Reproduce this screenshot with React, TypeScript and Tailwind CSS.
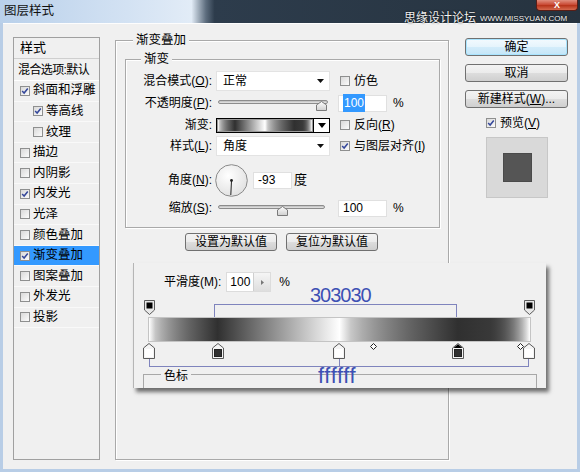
import React from "react";

// Gradient used by the preview swatch and the editor bar (stops 0/18/50/81/100).
const GRAD =
  "bg-[linear-gradient(to_right,#ffffff_0%,5%,#303030_18%,#ffffff_50%,59%,#303030_81%,97%,#ffffff_100%)]";

const STYLES = [
  { label: "斜面和浮雕", on: true },
  { label: "等高线", on: true, sub: true },
  { label: "纹理", sub: true },
  { label: "描边" },
  { label: "内阴影" },
  { label: "内发光", on: true },
  { label: "光泽" },
  { label: "颜色叠加" },
  { label: "渐变叠加", on: true, active: true },
  { label: "图案叠加" },
  { label: "外发光" },
  { label: "投影" },
];

const BTN =
  "h-[18px] border border-[#707070] rounded-[3px] bg-[linear-gradient(to_bottom,#f3f3f3_0%,#ebebeb_50%,#dddddd_51%,#cfcfcf_100%)] flex items-center justify-center text-[12px] text-black";

function Check({ on }: { on?: boolean }) {
  return (
    <span className="w-[10px] h-[10px] border border-[#8e8f8f] bg-[linear-gradient(135deg,#d9d9d9,#fbfbfb)] flex items-center justify-center shrink-0">
      {on && (
        <svg viewBox="0 0 9 9" className="w-[8px] h-[8px]">
          <path d="M1.3 4.6 L3.5 6.8 L7.6 1.6" stroke="#34479a" strokeWidth="1.7" fill="none" />
        </svg>
      )}
    </span>
  );
}

function Select({ value }: { value: string }) {
  return (
    <div className="w-[114px] h-[20px] bg-white border border-[#e3e3e3] flex items-center pl-[6px] pr-[5px]">
      <span className="flex-1">{value}</span>
      <svg width="7" height="4" viewBox="0 0 7 4">
        <path d="M0 0H7L3.5 4Z" fill="#111" />
      </svg>
    </div>
  );
}

function Thumb() {
  return (
    <svg width="11" height="10" viewBox="0 0 11 10">
      <defs>
        <linearGradient id="th" x1="0" y1="0" x2="0" y2="1">
          <stop offset="0" stopColor="#ffffff" />
          <stop offset="1" stopColor="#cfcfcf" />
        </linearGradient>
      </defs>
      <path d="M0.5 4 L5.5 0.5 L10.5 4 V9.5 H0.5 Z" fill="url(#th)" stroke="#7a7a7a" />
    </svg>
  );
}

function Slider({ pos, width }: { pos: number; width: number }) {
  return (
    <div className="w-[114px] h-[20px] relative pl-[2px] pt-[7px]">
      <div
        className="h-[4px] rounded-full border border-[#8c8c8c] bg-[linear-gradient(to_bottom,#bdbdbd,#e6e6e6)]"
        style={{ width }}
      />
      <div className="absolute top-[8px]" style={{ left: pos }}>
        <Thumb />
      </div>
    </div>
  );
}

function Field({ value, w, selected }: { value: string; w: string; selected?: boolean }) {
  return (
    <div className={`${w} h-[17px] bg-white border border-[#e0e0e0] flex items-center pl-[4px] font-['Liberation_Sans',sans-serif] text-[12px]`}>
      <span className={selected ? "bg-[#3399ff] text-white px-[1px]" : ""}>{value}</span>
    </div>
  );
}

function Label({ children }: { children: React.ReactNode }) {
  return <div className="w-[90px] pr-[4px] text-right shrink-0">{children}</div>;
}

function TopStop({ left }: { left: number }) {
  return (
    <svg width="11" height="15" viewBox="0 0 11 15" className="absolute top-[14px]" style={{ left }}>
      <path d="M0.5 0.5 H10.5 V10 L5.5 14.5 L0.5 10 Z" fill="#e8e8e8" stroke="#5a5a5a" />
      <rect x="2.5" y="2.5" width="6" height="6" fill="#000" />
    </svg>
  );
}

function BottomStop({ left, color, selected }: { left: number; color: string; selected?: boolean }) {
  return (
    <svg width="12" height="16" viewBox="0 0 12 16" className="absolute top-[57px]" style={{ left }}>
      <path d="M0.5 5 L6 0.5 L11.5 5 V15.5 H0.5 Z" fill="#f4f4f4" stroke="#5a5a5a" />
      {selected && <path d="M1.5 5 L6 1.3 L10.5 5 Z" fill="#000" />}
      <rect x="2.5" y="6.5" width="7" height="7" fill={color} stroke={color === "#ffffff" ? "#ffffff" : "#222"} />
    </svg>
  );
}

function Diamond({ left }: { left: number }) {
  return (
    <svg width="7" height="7" viewBox="0 0 7 7" className="absolute top-[57px]" style={{ left }}>
      <path d="M3.5 0.5 L6.5 3.5 L3.5 6.5 L0.5 3.5 Z" fill="#fff" stroke="#222" />
    </svg>
  );
}

function GradientOverlay() {
  return (
    <div className="absolute left-[133px] top-[263px] w-[413px] h-[125px] bg-[#f0f0f0] border-l border-[#b5b5b5] shadow-[3px_4px_4px_rgba(0,0,0,0.55)] flex flex-col">
      {/* smoothness row */}
      <div className="flex items-center h-[20px] mt-[9px] pl-[30px]">
        <span className="font-['Liberation_Sans','Noto_Sans_CJK_SC',sans-serif]">平滑度(M):</span>
        <div className="ml-[5px] w-[45px] h-[20px] bg-white border border-[#dcdcdc] flex items-center font-['Liberation_Sans',sans-serif]">
          <span className="flex-1 pl-[3px]">100</span>
          <span className="w-[17px] h-full border-l border-[#cfcfcf] bg-[linear-gradient(to_bottom,#f5f5f5,#dedede)] flex items-center justify-center">
            <svg width="3" height="5" viewBox="0 0 3 5">
              <path d="M0 0 L3 2.5 L0 5Z" fill="#777" />
            </svg>
          </span>
        </div>
        <span className="ml-[8px] font-['Liberation_Sans',sans-serif]">%</span>
      </div>

      {/* gradient editor canvas */}
      <div className="relative flex-1 -mt-[6px]">
        <div className="absolute left-[176px] -top-[1px] text-[20px] leading-[20px] tracking-[-1px] text-[#3d50b4] font-['Liberation_Sans',sans-serif]">
          303030
        </div>
        <div className="absolute left-[80px] top-[18px] w-[243px] h-[14px] border-t border-l border-r border-[#7f84bd]" />
        <TopStop left={10} />
        <TopStop left={390} />
        <div className={`absolute left-[14px] top-[31px] w-[383px] h-[25px] border border-[#c4c4c4] ${GRAD}`} />
        <BottomStop left={9} color="#ffffff" />
        <BottomStop left={78} color="#303030" />
        <BottomStop left={199} color="#ffffff" />
        <BottomStop left={318} color="#303030" selected />
        <BottomStop left={389} color="#ffffff" />
        <Diamond left={236} />
        <Diamond left={383} />
        <div className="absolute left-[15px] top-[73px] w-[380px] h-[8px] border-l border-r border-b border-[#7f84bd]" />
        <div className="absolute left-[205px] top-[73px] w-[1px] h-[8px] bg-[#7f84bd]" />
        {/* 色标 group */}
        <div className="absolute left-[9px] top-[88px] w-[394px] h-[14px] border-t border-l border-r border-[#a8a8a8]" />
        <div className="absolute left-[27px] top-[81px] px-[3px] bg-[#f0f0f0] text-[12px]">色标</div>
        <div className="absolute left-[184px] top-[79px] text-[22px] leading-[22px] tracking-[0.6px] text-[#3d50b4] font-['Liberation_Sans',sans-serif]">
          ffffff
        </div>
      </div>
    </div>
  );
}

export default function App() {
  return (
    <div className="w-[580px] h-[472px] relative overflow-hidden flex flex-col bg-[#b8cde6] text-[12px] text-black font-['Liberation_Sans','Noto_Sans_CJK_SC',sans-serif]">
      {/* Title bar */}
      <div className="h-[23px] shrink-0 relative flex items-center pl-[4px] bg-[linear-gradient(to_right,#b9d0ea_0%,#d3e2f3_22%,#e2ecf7_33%,#5d6d7e_35.5%,#2d3c4c_37%,#26333f_100%)]">
        <span className="text-[12.5px] leading-none text-[#111]">图层样式</span>
        <div className="absolute right-[2px] top-0 w-[42px] h-[11px] rounded-b-[4px] border border-t-0 border-[#5a1e16] bg-[linear-gradient(to_bottom,#e08f7f,#c8452f_50%,#b53118_51%,#d56a4f)] flex items-center justify-center">
          <span className="text-white text-[9px] leading-none font-bold">X</span>
        </div>
        <div className="absolute left-[404px] top-[11px] flex items-end gap-[4px] whitespace-nowrap text-[#f0f0f0] [text-shadow:0_0_2px_#000]">
          <span className="text-[12px] leading-[12px] font-['Noto_Sans_CJK_SC',sans-serif]">思缘设计论坛</span>
          <span className="text-[8px] leading-[9px]">WWW.MISSYUAN.COM</span>
        </div>
      </div>

      {/* Body */}
      <div className="flex-1 mx-[3px] mb-[3px] bg-[#f0f0f0] border-t border-[#fdfdfd] flex items-start">
        {/* Styles list */}
        <div className="ml-[10px] mt-[13px] w-[87px] h-[423px] border border-[#a0a0a0] flex flex-col">
          <div className="h-[21px] border-b border-[#cfcfcf] flex items-center pl-[6px] text-[13px]">样式</div>
          <div className="h-[22px] border-b border-white flex items-center pl-[4px] tracking-[-0.6px] whitespace-nowrap">
            混合选项:默认
          </div>
          {STYLES.map((s) => (
            <div
              key={s.label}
              className={`h-[20.6px] shrink-0 flex items-center gap-[3px] border-b border-[#f9f9f9] ${
                s.sub ? "pl-[19px]" : "pl-[6px]"
              } ${s.active ? "bg-[#3399ff]" : ""}`}
            >
              <Check on={s.on} />
              <span className="text-[12.5px]">{s.label}</span>
            </div>
          ))}
        </div>

        {/* Gradient overlay group */}
        <div className="ml-[15px] mt-[16px] w-[334px] h-[420px] border border-[#a9a9a9] shadow-[inset_1px_1px_0_#fff,1px_1px_0_#fff] flex flex-col">
          <div className="-mt-[8px] ml-[17px] px-[3px] bg-[#f0f0f0] w-fit text-[12.5px] leading-[14px]">渐变叠加</div>

          {/* inner 渐变 group */}
          <div className="ml-[9px] mt-[12px] w-[315px] h-[169px] border border-[#a9a9a9] shadow-[inset_1px_1px_0_#fff,1px_1px_0_#fff] flex flex-col">
            <div className="-mt-[8px] ml-[15px] px-[3px] bg-[#f0f0f0] w-fit text-[12.5px] leading-[14px]">渐变</div>

            <div className="flex items-center h-[20px] mt-[5px]">
              <Label>
                混合模式(<u>O</u>):
              </Label>
              <Select value="正常" />
              <div className="ml-[10px] flex items-center gap-[4px]">
                <Check />
                <span>仿色</span>
              </div>
            </div>

            <div className="flex items-center h-[22px] mt-[1px]">
              <Label>
                不透明度(<u>P</u>):
              </Label>
              <Slider pos={100} width={110} />
              <div className="ml-[8px]">
                <Field value="100" w="w-[49px]" selected />
              </div>
              <span className="ml-[6px] font-['Liberation_Sans',sans-serif]">%</span>
            </div>

            <div className="flex items-center h-[22px]">
              <Label>渐变:</Label>
              <div className="w-[114px] h-[15px] border border-black flex">
                <div className={`flex-1 border border-[#9a9a9a] ${GRAD}`} />
                <div className="w-[16px] border-l border-black bg-white flex items-center justify-center">
                  <svg width="8" height="5" viewBox="0 0 8 5">
                    <path d="M0 0H8L4 5Z" fill="#000" />
                  </svg>
                </div>
              </div>
              <div className="ml-[10px] flex items-center gap-[4px]">
                <Check />
                <span>
                  反向(<u>R</u>)
                </span>
              </div>
            </div>

            <div className="flex items-center h-[20px]">
              <Label>
                样式(<u>L</u>):
              </Label>
              <Select value="角度" />
              <div className="ml-[10px] flex items-center gap-[4px] whitespace-nowrap">
                <Check on />
                <span>
                  与图层对齐(<u>I</u>)
                </span>
              </div>
            </div>

            <div className="flex items-center h-[44px] mt-[2px]">
              <Label>
                角度(<u>N</u>):
              </Label>
              <svg width="33" height="33" viewBox="0 0 33 33" className="-ml-[1px]">
                <defs>
                  <radialGradient id="dial" cx="0.4" cy="0.35" r="0.7">
                    <stop offset="0" stopColor="#ffffff" />
                    <stop offset="1" stopColor="#e0e0e0" />
                  </radialGradient>
                </defs>
                <circle cx="16.5" cy="16.5" r="15.8" fill="url(#dial)" stroke="#8a8a8a" />
                <line x1="16.5" y1="16.5" x2="15.8" y2="31" stroke="#222" strokeWidth="1" />
                <circle cx="16.5" cy="16.5" r="1.4" fill="#222" />
              </svg>
              <div className="ml-[5px]">
                <Field value="-93" w="w-[39px]" />
              </div>
              <span className="ml-[2px] text-[13px]">度</span>
            </div>

            <div className="flex items-center h-[12px]">
              <Label>
                缩放(<u>S</u>):
              </Label>
              <Slider pos={61} width={107} />
              <div className="ml-[8px]">
                <Field value="100" w="w-[49px]" />
              </div>
              <span className="ml-[6px] font-['Liberation_Sans',sans-serif]">%</span>
            </div>
          </div>

          <div className="flex gap-[9px] ml-[69px] mt-[5px]">
            <div className={`${BTN} w-[92px]`}>设置为默认值</div>
            <div className={`${BTN} w-[92px]`}>复位为默认值</div>
          </div>
        </div>

        {/* Right buttons */}
        <div className="ml-[16px] mt-[14px] w-[103px] flex flex-col">
          <div className={`${BTN} border-[#3c7fb1] shadow-[inset_0_0_0_1px_#a8e4ff] bg-[linear-gradient(to_bottom,#f3fafe,#e5f4fc_50%,#d3ecfa_51%,#c4e6f8)]`}>
            确定
          </div>
          <div className={`${BTN} mt-[8px]`}>取消</div>
          <div className={`${BTN} mt-[8px] whitespace-nowrap`}>
            新建样式(<u>W</u>)...
          </div>
          <div className="mt-[8px] pl-[21px] flex items-center gap-[4px] h-[14px]">
            <Check on />
            <span>
              预览(<u>V</u>)
            </span>
          </div>
          <div className="mt-[7px] ml-[21px] w-[62px] h-[61px] bg-[#d9d9d9] border border-[#c7c7c7] flex items-center justify-center">
            <div className="w-[29px] h-[29px] bg-[#555555] border border-[#4a4a4a]" />
          </div>
        </div>
      </div>

      <GradientOverlay />
    </div>
  );
}
